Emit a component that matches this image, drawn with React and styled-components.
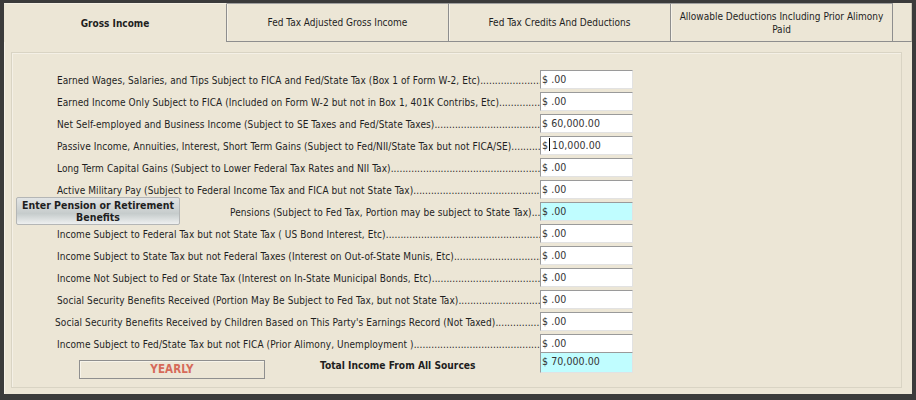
import React from 'react'
import { styled, createGlobalStyle } from 'styled-components'

const GlobalStyle = createGlobalStyle`
  html, body {
    margin: 0;
    padding: 0;
    background: #3b3b3b;
  }
  body {
    font-family: "DejaVu Sans Condensed", "DejaVu Sans", sans-serif;
    font-stretch: condensed;
    font-size: 10px;
    letter-spacing: 0.08px;
    color: #1e1e1e;
  }
`

const rows = [
  { label: 'Earned Wages, Salaries, and Tips Subject to FICA and Fed/State Tax (Box 1 of Form W-2, Etc)', value: '.00' },
  { label: 'Earned Income Only Subject to FICA (Included on Form W-2 but not in Box 1, 401K Contribs, Etc)', value: '.00' },
  { label: 'Net Self-employed and Business Income (Subject to SE Taxes and Fed/State Taxes)', value: '60,000.00' },
  { label: 'Passive Income, Annuities, Interest, Short Term Gains (Subject to Fed/NII/State Tax but not FICA/SE)', value: '10,000.00', caret: true },
  { label: 'Long Term Capital Gains (Subject to Lower Federal Tax Rates and NII Tax)', value: '.00' },
  { label: 'Active Military Pay (Subject to Federal Income Tax and FICA but not State Tax)', value: '.00' },
  { label: 'Pensions (Subject to Fed Tax, Portion may be subject to State Tax)', value: '.00', pension: true },
  { label: 'Income Subject to Federal Tax but not State Tax ( US Bond Interest, Etc)', value: '.00' },
  { label: 'Income Subject to State Tax but not Federal Taxes (Interest on Out-of-State Munis, Etc)', value: '.00' },
  { label: 'Income Not Subject to Fed or State Tax (Interest on In-State Municipal Bonds, Etc)', value: '.00' },
  { label: 'Social Security Benefits Received (Portion May Be Subject to Fed Tax, but not State Tax)', value: '.00' },
  { label: "Social Security Benefits Received by Children Based on This Party's Earnings Record (Not Taxed)", value: '.00', indent: 43 },
  { label: 'Income Subject to Fed/State Tax but not FICA (Prior Alimony, Unemployment )', value: '.00' },
]

const tabs = [
  { title: 'Gross Income', active: true },
  { title: 'Fed Tax Adjusted Gross Income' },
  { title: 'Fed Tax Credits And Deductions' },
  { title: 'Allowable Deductions Including Prior Alimony Paid' },
]

function App() {
  return (
    <>
      <GlobalStyle />
      <Window>
        <TabBar>
          {tabs.map((t) => (
            <Tab key={t.title} $active={t.active}>{t.title}</Tab>
          ))}
          <TabFiller />
        </TabBar>
        <Content>
          <Panel>
            {rows.map((r) => (
              <Row key={r.label}>
                {r.pension && (
                  <PensionButton>
                    Enter Pension or Retirement<br />Benefits
                  </PensionButton>
                )}
                <Label $indent={r.pension ? 50 : (r.indent ?? 45)}>
                  <LabelText>{r.label}</LabelText>
                  <Dots>{'.'.repeat(200)}</Dots>
                </Label>
                <Field $hl={r.pension}>
                  $
                  {r.caret ? <Caret /> : ' '}
                  {r.value}
                </Field>
              </Row>
            ))}
            <TotalRow>
              <Yearly>YEARLY</Yearly>
              <TotalLabel>Total Income From All Sources</TotalLabel>
              <Field $hl $tall>$ 70,000.00</Field>
            </TotalRow>
          </Panel>
        </Content>
      </Window>
    </>
  )
}

export default App

const Window = styled.div`
  margin: 3px 0 0 4px;
  width: 908px;
  height: 391px;
  background: #ece6d6;
  display: flex;
  flex-direction: column;
  box-shadow: inset 1px 0 0 #f6f2e8;
`

const TabBar = styled.div`
  display: flex;
  height: 39px;
  flex-shrink: 0;
`

const Tab = styled.div`
  box-sizing: border-box;
  width: ${(p) => (p.$active ? '223px' : '222px')};
  height: 39px;
  display: flex;
  align-items: center;
  justify-content: center;
  text-align: center;
  padding: 0 2px;
  letter-spacing: 0;
  line-height: 13px;
  background: #ece6d6;
  font-weight: ${(p) => (p.$active ? 'bold' : 'normal')};
  border-bottom: ${(p) => (p.$active ? 'none' : '1px solid #8e8e8e')};
  border-right: 1px solid #8e8e8e;
  border-top: 1px solid ${(p) => (p.$active ? '#f3efe4' : '#a0a0a0')};
  box-shadow: ${(p) => (p.$active ? 'none' : 'inset 1px 0 0 #f6f2e8')};
`

const TabFiller = styled.div`
  flex: 1;
  box-sizing: border-box;
  height: 39px;
  border-bottom: 1px solid #8e8e8e;
  border-right: 1px solid #c8c3b4;
`

const Content = styled.div`
  flex: 1;
  min-height: 0;
  padding: 10px 10px 6px 7px;
  display: flex;
`

const Panel = styled.div`
  flex: 1;
  min-width: 0;
  border: 1px solid #d9d4c4;
  box-shadow: inset 1px 1px 0 #f4f0e6;
  padding-top: 15px;
  display: flex;
  flex-direction: column;
`

const Row = styled.div`
  display: flex;
  align-items: center;
  height: 22px;
  padding-right: 268px;
`

const Label = styled.div`
  flex: 1 1 0;
  min-width: 0;
  display: flex;
  padding-left: ${(p) => p.$indent}px;
  white-space: nowrap;
  padding-top: 2px;
`

const LabelText = styled.span`
  flex-shrink: 0;
`

const Dots = styled.span`
  flex: 1 1 0;
  overflow: hidden;
  min-width: 0;
`

const Field = styled.div`
  box-sizing: border-box;
  width: 93px;
  height: ${(p) => (p.$tall ? '21px' : '19px')};
  flex-shrink: 0;
  background: ${(p) => (p.$hl ? '#c0fdff' : '#ffffff')};
  border: 1px solid;
  border-color: #9a9a9a #e2e2e2 #e2e2e2 #9a9a9a;
  padding-left: 1px;
  font-size: 10.5px;
  line-height: 16px;
  color: #333;
  white-space: nowrap;
`

const Caret = styled.span`
  display: inline-block;
  width: 1px;
  height: 13px;
  background: #000;
  vertical-align: -2px;
  margin: 0 2px 0 1px;
`

const PensionButton = styled.div`
  box-sizing: border-box;
  width: 164px;
  height: 28px;
  margin-left: 4px;
  flex-shrink: 0;
  border: 1px solid #b4b6b6;
  border-radius: 2px;
  background: linear-gradient(to bottom, #e2e4e4 0%, #cdd2d2 45%, #c6cccc 60%, #eef0f0 100%);
  font-weight: bold;
  font-size: 10.5px;
  letter-spacing: 0;
  line-height: 12px;
  text-align: center;
  white-space: nowrap;
  display: flex;
  align-items: center;
  justify-content: center;
`

const TotalRow = styled.div`
  display: flex;
  align-items: flex-start;
  margin-top: -2px;
  padding-right: 268px;
`

const Yearly = styled.div`
  box-sizing: border-box;
  width: 186px;
  height: 19px;
  margin: 8px 0 0 67px;
  border: 1px solid #8f8f8f;
  box-shadow: inset 1px 1px 0 #f7f4ea;
  color: #d66a5a;
  font-weight: bold;
  font-size: 11.5px;
  line-height: 17px;
  text-align: center;
  flex-shrink: 0;
`

const TotalLabel = styled.div`
  flex: 1;
  margin: 8px 0 0 55px;
  font-weight: bold;
  font-size: 10.2px;
  letter-spacing: 0;
  white-space: nowrap;
`
